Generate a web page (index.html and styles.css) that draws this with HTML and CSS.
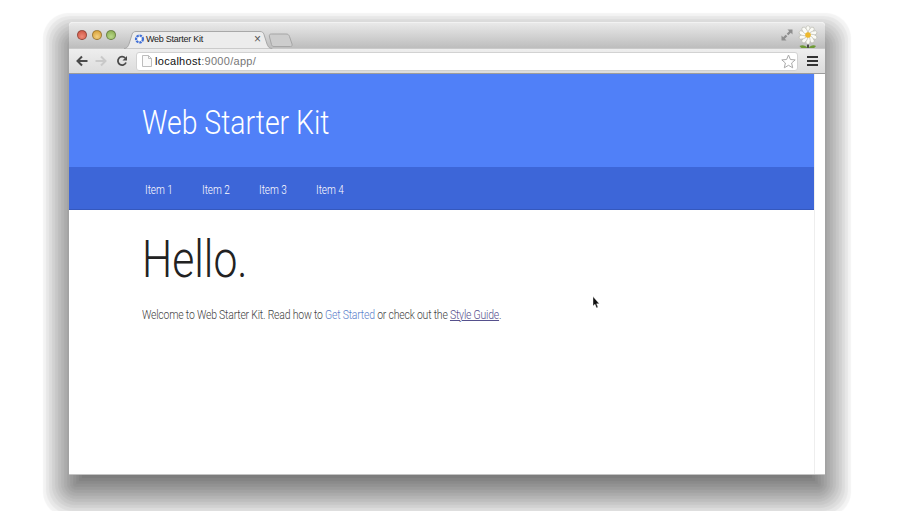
FILE: index.html
```html
<!DOCTYPE html>
<html lang="en">
<head>
<meta charset="utf-8">
<title>Web Starter Kit</title>
<link rel="stylesheet" href="styles.css">
</head>
<body>
<div class="window">
  <div class="titlebar">
    <div class="lights">
      <span class="light red"></span>
      <span class="light yellow"></span>
      <span class="light green"></span>
    </div>
    <div class="tab">
      <svg class="tab-shape" width="172" height="18" viewBox="0 0 172 18"><path d="M150 15.500C148.500 15.500 148 15 147.500 13.500L145.500 6C145 4 145.500 3 147.500 3H162C164 3 164.800 3.800 165.500 5.500L168 13C168.500 14.500 168 15.500 166.500 15.500Z" fill="#cdcdcd" stroke="#a6a6a6"/><path d="M0 17.500C3 17.500 4 15.500 5 13L8 3.500C8.700 1.300 10 .5 12 .5H136C138 .5 139.300 1.300 140 3.500L143 13C144 15.500 145 17.500 148 17.500V18H0Z" fill="#ececec" stroke="#a8a8a8"/></svg>
      <svg class="favicon" width="11" height="12" viewBox="0 0 12 12"><circle cx="6" cy="6" r="3.800" fill="none" stroke="#3f6fd8" stroke-width="2.400" stroke-dasharray="2.600 .9"/><circle cx="6" cy="6" r="1.700" fill="#fff"/></svg>
      <span class="tab-title">Web Starter Kit</span>
      <span class="tab-close">×</span>
    </div>
    <div class="title-right">
      <svg class="fullscreen" width="12" height="12" viewBox="0 0 12 12"><path d="M6.500 .5H11.500V5.500L9.800 3.800 7.300 6.300 5.700 4.700 8.200 2.200ZM5.500 11.500H.5V6.500L2.200 8.200 4.700 5.700 6.300 7.300 3.800 9.800Z" fill="#8e8e8e"/></svg>
      <svg class="daisy" width="20" height="24" viewBox="0 0 20 24">
        <path d="M10 17V24" stroke="#222" stroke-width="1.500"/>
        <path d="M9.500 23C7.500 20 4 19.500 1.500 21C3.500 24 7 24.500 9.500 23ZM10.500 23C12.500 20 16 19.500 18 21C16 24 13 24.500 10.500 23Z" fill="#6e9a35"/>
        <g fill="#fbfbf6" stroke="#a9a99c" stroke-width=".5">
          <ellipse cx="10" cy="4.500" rx="2.200" ry="3.900"/>
          <ellipse cx="10" cy="4.500" rx="2.200" ry="3.900" transform="rotate(36 10 10)"/>
          <ellipse cx="10" cy="4.500" rx="2.200" ry="3.900" transform="rotate(72 10 10)"/>
          <ellipse cx="10" cy="4.500" rx="2.200" ry="3.900" transform="rotate(108 10 10)"/>
          <ellipse cx="10" cy="4.500" rx="2.200" ry="3.900" transform="rotate(144 10 10)"/>
          <ellipse cx="10" cy="4.500" rx="2.200" ry="3.900" transform="rotate(180 10 10)"/>
          <ellipse cx="10" cy="4.500" rx="2.200" ry="3.900" transform="rotate(216 10 10)"/>
          <ellipse cx="10" cy="4.500" rx="2.200" ry="3.900" transform="rotate(252 10 10)"/>
          <ellipse cx="10" cy="4.500" rx="2.200" ry="3.900" transform="rotate(288 10 10)"/>
          <ellipse cx="10" cy="4.500" rx="2.200" ry="3.900" transform="rotate(324 10 10)"/>
        </g>
        <circle cx="10" cy="10" r="2.800" fill="#eeb92c"/>
      </svg>
    </div>
  </div>
  <div class="toolbar">
    <svg class="nav-icon back" width="12" height="12" viewBox="0 0 12 12"><path d="M6 1.500 1.500 6 6 10.500M2 6H11.500" fill="none" stroke="#4a4a4a" stroke-width="2"/></svg>
    <svg class="nav-icon forward" width="12" height="12" viewBox="0 0 12 12"><path d="M6 1.500 10.500 6 6 10.500M10 6H.5" fill="none" stroke="#c9c9c9" stroke-width="2"/></svg>
    <svg class="nav-icon reload" width="12" height="12" viewBox="0 0 12 12"><path d="M10 7.500A4.200 4.200 0 1 1 9.200 3" fill="none" stroke="#4a4a4a" stroke-width="1.800"/><path d="M11 1V5.500H6.500Z" fill="#4a4a4a"/></svg>
    <div class="omnibox">
      <svg class="page-icon" width="10" height="12" viewBox="0 0 10 12"><path d="M.5.5H6.500L9.500 3.500V11.500H.5Z" fill="#fafafa" stroke="#bdbdbd"/><path d="M6.500.5V3.500H9.500" fill="none" stroke="#bdbdbd"/></svg>
      <span class="url"><span class="host">localhost</span>:9000/app/</span>
      <svg class="star" width="15" height="15" viewBox="0 0 15 15"><path d="M7.500 1 9.400 5.500 14.200 5.900 10.600 9 11.700 13.800 7.500 11.300 3.300 13.800 4.400 9 .8 5.900 5.600 5.500Z" fill="#fff" stroke="#a9a9a9"/></svg>
    </div>
    <div class="menu-icon"><span></span><span></span><span></span></div>
  </div>
  <div class="viewport">
    <div class="page">
      <header class="masthead"><h2 class="site-title">Web Starter Kit</h2></header>
      <nav class="site-nav">
        <a class="nav-item">Item 1</a>
        <a class="nav-item">Item 2</a>
        <a class="nav-item">Item 3</a>
        <a class="nav-item">Item 4</a>
      </nav>
      <main class="content">
        <h1 class="hello">Hello.</h1>
        <p class="intro">Welcome to Web Starter Kit. Read how to <a class="link-blue">Get Started</a> or check out the <a class="link-visited">Style Guide</a>.</p>
      </main>
    </div>
    <div class="scrollbar"></div>
  </div>
  <svg class="cursor" width="8" height="13" viewBox="0 0 8 13"><path d="M1 .5V10L3 8.200 4.500 12 6 11.300 4.600 7.800H7.300Z" fill="#111" stroke="#fff" stroke-width=".4"/></svg>
</div>
</body>
</html>
```
FILE: styles.css
```css
* { box-sizing: border-box; }
html { background: #fff; }
html, body { margin: 0; height: 100%; overflow: hidden; }
body { padding: 22px 0 0 69px; font-family: Roboto, "Liberation Sans", sans-serif; }

.window {
  position: relative;
  width: 756px;
  height: 453px;
  display: flex;
  flex-direction: column;
  background: #fff;
  border-radius: 4px 4px 0 0;
  border-bottom: 1px solid #c4c4c4;
}
/* banded drop shadow, one hard step per layer */
.window::before {
  content: "";
  position: absolute;
  inset: 0;
  z-index: -1;
  border-radius: 8px;
  box-shadow:
    0 17px 1px 26px rgba(0, 0, 0, .049),
    0 17px 1px 23px rgba(0, 0, 0, .049),
    0 17px 1px 20px rgba(0, 0, 0, .049),
    0 17px 1px 17px rgba(0, 0, 0, .049),
    0 17px 1px 14px rgba(0, 0, 0, .049),
    0 17px 1px 11px rgba(0, 0, 0, .049),
    0 17px 1px 8px rgba(0, 0, 0, .049),
    0 17px 1px 5px rgba(0, 0, 0, .049),
    0 17px 1px 2px rgba(0, 0, 0, .049),
    0 17px 1px -1px rgba(0, 0, 0, .049),
    0 17px 1px -4px rgba(0, 0, 0, .049),
    0 17px 1px -7px rgba(0, 0, 0, .049),
    0 17px 1px -10px rgba(0, 0, 0, .049),
    0 17px 1px -13px rgba(0, 0, 0, .049),
    0 17px 1px -16px rgba(0, 0, 0, .049);
}

.titlebar {
  height: 26px;
  display: flex;
  background: linear-gradient(#e9e9e9, #bdbdbd);
  border-top: 1px solid #f2f2f2;
  border-radius: 4px 4px 0 0;
}
.lights { display: flex; gap: 4.500px; padding: 7px 0 0 8px; width: 55px; height: 20px; }
.light { width: 10px; height: 10px; border-radius: 50%; border: 1px solid rgba(0, 0, 0, .3); }
.red { background: radial-gradient(circle at 50% 70%, #f08a78, #c9503f); }
.yellow { background: radial-gradient(circle at 50% 70%, #f4d080, #d39a2e); }
.green { background: radial-gradient(circle at 50% 70%, #b9d98a, #84a84a); }

.tab {
  position: relative;
  z-index: 1;
  width: 172px;
  height: 18px;
  margin-top: 8px;
  padding: 2px 0 0 10px;
  display: flex;
  align-items: flex-start;
  font: 9px/12px "Liberation Sans", sans-serif;
  color: #222;
}
.tab-shape { position: absolute; left: 0; top: 0; }
.favicon { position: relative; margin-right: 1px; }
.tab-title { position: relative; width: 108px; letter-spacing: -.25px; }
.tab-close { position: relative; font-size: 12px; color: #555; }

.title-right { margin-left: auto; display: flex; align-items: flex-start; gap: 5px; padding: 2px 7px 0 0; }
.fullscreen { margin-top: 4px; }

.toolbar {
  height: 26px;
  display: flex;
  align-items: center;
  padding: 0 7px;
  background: linear-gradient(#eeeeee, #dcdcdc);
  border-top: 1px solid #c9c9c9;
  border-bottom: 1px solid #9c9c9c;
}
.back { margin-right: 7px; }
.forward { margin-right: 9px; }
.reload { margin-right: 8px; }
.omnibox {
  width: 662px;
  height: 19px;
  display: flex;
  align-items: center;
  padding: 0 1px 0 5px;
  background: #fff;
  border: 1px solid #d2d2d2;
  border-radius: 3px;
}
.url { margin-left: 3px; font: 11px/1 "Liberation Sans", sans-serif; color: #777; letter-spacing: .3px; }
.host { color: #111; }
.star { margin-left: auto; }
.menu-icon { margin-left: 9px; width: 11px; display: flex; flex-direction: column; gap: 2px; }
.menu-icon span { height: 2px; background: #333; }

.viewport { flex: 1; display: flex; min-height: 0; }
.page { flex: 1; min-width: 0; }
.scrollbar { width: 11px; background: #fff; border-left: 1px solid #eeeeee; }

.site-title, .nav-item, .hello, .intro { transform-origin: left center; white-space: nowrap; }

.masthead {
  height: 93px;
  display: flex;
  align-items: center;
  padding: 3px 0 0 73px;
  background: #5080f8;
}
.site-title {
  margin: 0;
  font-size: 33px;
  font-weight: 300;
  color: #fff;
  transform: scaleX(.86);
}
.site-nav {
  height: 43px;
  display: flex;
  align-items: center;
  gap: 30px;
  padding: 3px 0 0 76px;
  background: #3d66d8;
  border-bottom: 1px solid #3558bd;
}
.nav-item { width: 27px; font-size: 12px; font-weight: 300; color: #fff; transform: scaleX(.83); }

.content { padding: 21px 0 0 73px; }
.hello { margin: 0; font-size: 52px; line-height: 58px; font-weight: 300; color: #222; transform: scaleX(.82); }
.intro { margin: 18px 0 0; font-size: 12px; line-height: 16px; font-weight: 300; letter-spacing: -.22px; color: #444; transform: scaleX(.87); }
.link-blue { color: #5d7fcb; }
.link-visited { color: #55508c; text-decoration: underline; }

.cursor { position: absolute; left: 523px; top: 274px; }
```
